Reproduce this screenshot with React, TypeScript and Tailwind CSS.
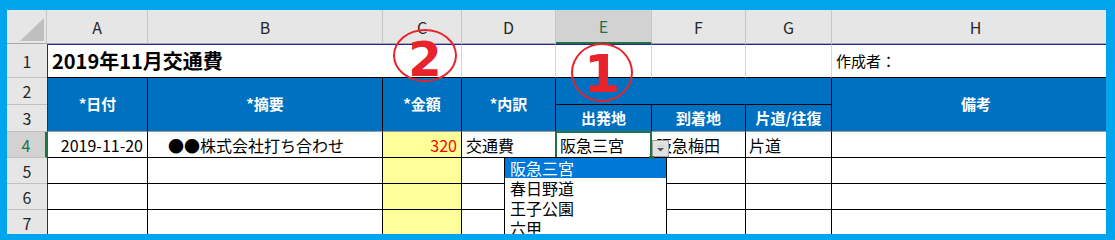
import React from "react";

const hdr = "bg-[#e6e6e6] border-r border-r-[#c6c6c6] border-b border-b-[#a9a9a9] flex items-center justify-center text-[16px] text-[#262626]";
const rowNum = "bg-[#e6e6e6] border-b border-b-[#c0c0c0] flex items-center justify-center text-[16px] text-[#262626]";
const r1 = "bg-white border-t border-t-[#23239c] border-b border-b-black";
const blue = "bg-[#0070c0] text-white font-bold text-[15px] flex items-center justify-center border-r border-r-black";
const body = "border-r border-r-black border-b border-b-black flex items-center text-[16px] whitespace-nowrap overflow-hidden";

function BodyRow({ n, sel, cells }: { n: number; sel?: boolean; cells?: string[] }) {
  const c = cells ?? ["", "", "", "", "", "", "", ""];
  return (
    <>
      <div
        className={
          sel
            ? "bg-[#d2d2d2] border-b border-b-[#c0c0c0] border-r-2 border-r-[#217346] flex items-center justify-center text-[16px] text-[#217346]"
            : rowNum
        }
      >
        {n}
      </div>
      <div className={`${body} text-black border-l ${sel ? "border-l-[#217346]" : "border-l-[#23239c]"} justify-end pr-[4px]`}>{c[0]}</div>
      <div className={`${body} text-black pl-[20px]`}>{c[1]}</div>
      <div className={`${body} bg-[#ffff99] justify-end pr-[4px] text-[#ff0000]`}>{c[2]}</div>
      <div className={`${body} text-black pl-[4px]`}>{c[3]}</div>
      <div className={`${body} text-black pl-[4px]`}>{c[4]}</div>
      <div className={`${body} text-black pl-[4px]`}>{c[5]}</div>
      <div className={`${body} text-black pl-[3px]`}>{c[6]}</div>
      <div className={`${body} text-black`}>{c[7]}</div>
    </>
  );
}

export default function App() {
  return (
    <div className="w-[1115px] h-[240px] bg-[#00a5ee] pt-[10px] pl-[7px] pr-[9px] pb-[6px] overflow-hidden font-['Noto_Sans_CJK_JP','Noto_Sans',sans-serif]">
      <div className="relative w-full h-full overflow-hidden bg-white">
        <div className="grid w-max grid-cols-[40px_101px_235px_79px_94px_96px_94px_86px_288px] grid-rows-[34px_34px_27px_27px_26px_26px_26px_26px]">
          {/* column headers */}
          <div className="bg-[#e6e6e6] border-r border-r-[#c6c6c6] border-b border-b-[#a9a9a9] relative">
            <svg className="absolute left-0 top-0" width="40" height="34" viewBox="0 0 40 34">
              <polygon points="37,8 37,31 13,31" fill="#bfbfbf" />
            </svg>
          </div>
          <div className={hdr}>A</div>
          <div className={hdr}>B</div>
          <div className={hdr}>C</div>
          <div className={hdr}>D</div>
          <div className="bg-[#d2d2d2] border-r border-r-[#c6c6c6] border-b-2 border-b-[#217346] flex items-center justify-center text-[16px] text-[#217346]">E</div>
          <div className={hdr}>F</div>
          <div className={hdr}>G</div>
          <div className={hdr}>H</div>

          {/* row 1 */}
          <div className={rowNum}>1</div>
          <div className={`${r1} col-span-2 border-l border-l-[#23239c] flex items-center pl-[4px] text-[20px] font-bold text-black whitespace-nowrap`}>
            2019年11月交通費
          </div>
          <div className={`${r1} border-r border-r-[#d4d4d4]`}></div>
          <div className={`${r1} border-r border-r-[#d4d4d4]`}></div>
          <div className={`${r1} border-r border-r-[#d4d4d4]`}></div>
          <div className={`${r1} border-r border-r-[#d4d4d4]`}></div>
          <div className={`${r1} border-r border-r-[#d4d4d4]`}></div>
          <div className={`${r1} flex items-center pl-[4px] text-[15px] text-black`}>作成者：</div>

          {/* rows 2-3 */}
          <div className={rowNum}>2</div>
          <div className={`${blue} row-span-2 border-l border-l-[#23239c] border-b border-b-[#9a9a9a]`}>*日付</div>
          <div className={`${blue} row-span-2 border-b border-b-[#9a9a9a]`}>*摘要</div>
          <div className={`${blue} row-span-2 border-b border-b-[#9a9a9a]`}>*金額</div>
          <div className={`${blue} row-span-2 border-b border-b-[#9a9a9a]`}>*内訳</div>
          <div className={`${blue} col-span-3 border-b border-b-black`}></div>
          <div className={`${blue} row-span-2 border-r-0 border-b border-b-[#9a9a9a]`}>備考</div>
          <div className={rowNum}>3</div>
          <div className={`${blue} border-b border-b-[#9a9a9a]`}>出発地</div>
          <div className={`${blue} border-b border-b-[#9a9a9a]`}>到着地</div>
          <div className={`${blue} border-b border-b-[#9a9a9a]`}>片道/往復</div>

          {/* body rows */}
          <BodyRow n={4} sel cells={["2019-11-20", "●●株式会社打ち合わせ", "320", "交通費", "阪急三宮", "阪急梅田", "片道", ""]} />
          <BodyRow n={5} />
          <BodyRow n={6} />
          <BodyRow n={7} />
        </div>

        {/* selection border on E4 */}
        <div className="absolute left-[548px] top-[121px] w-[97px] h-[28px] border-2 border-[#217346]"></div>

        {/* dropdown button */}
        <div className="absolute left-[645px] top-[130px] w-[17px] h-[17px] bg-[#e1e1e1] border border-[#a0a0a0] flex items-center justify-center">
          <svg width="9" height="7" viewBox="0 0 9 7">
            <rect x="1" y="0.5" width="7" height="1" fill="#c8c8c8" />
            <polygon points="1,3 8,3 4.5,6.5" fill="#555555" />
          </svg>
        </div>

        {/* dropdown list */}
        <div className="absolute left-[497px] top-[147px] w-[163px] h-[100px] bg-white border border-black text-[16px] leading-[20px] text-black">
          <div className="h-[20px] bg-[#0078d7] text-white pl-[5px]">阪急三宮</div>
          <div className="h-[20px] pl-[5px]">春日野道</div>
          <div className="h-[20px] pl-[5px]">王子公園</div>
          <div className="h-[20px] pl-[5px]">六甲</div>
        </div>

        {/* fill handle */}
        <div className="absolute left-[642px] top-[146px] w-[5px] h-[3px] bg-[#217346]"></div>

        {/* circled numbers */}
        <div className="absolute left-[386px] top-[19px] w-[64px] h-[53px] rounded-[50%] border-2 border-[#e8232b] flex items-center justify-center pt-[6px] text-[48px] leading-none font-bold text-[#e8232b] font-['DejaVu_Sans',sans-serif]">
          2
        </div>
        <div className="absolute left-[564px] top-[33px] w-[62px] h-[59px] rounded-[50%] border-2 border-[#e8232b] flex items-center justify-center pt-[2px] text-[52px] leading-none font-bold text-[#e8232b] font-['DejaVu_Sans',sans-serif]">
          1
        </div>
      </div>
    </div>
  );
}
